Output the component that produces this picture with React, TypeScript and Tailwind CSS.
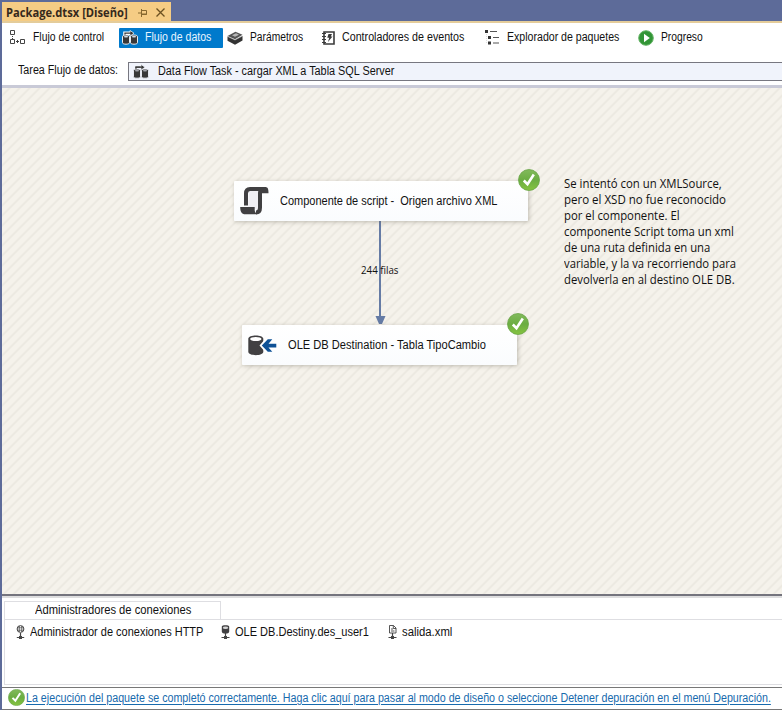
import { useLayoutEffect, useRef } from "react";
import type { ReactNode } from "react";

type FitProps = { w: number; children: string; className?: string };

// Label condensed or widened horizontally so the text takes exactly `w` pixels.
function Fit({ w, children, className = "" }: FitProps) {
  const ref = useRef<HTMLSpanElement>(null);
  useLayoutEffect(() => {
    const el = ref.current;
    if (!el) return;
    el.style.transform = `scaleX(${w / el.offsetWidth})`;
  }, [w, children]);
  return (
    <span className={`inline-block shrink-0 whitespace-pre ${className}`} style={{ width: w }}>
      <span ref={ref} className="inline-block origin-left">
        {children}
      </span>
    </span>
  );
}

function Check({ size }: { size: number }) {
  return (
    <svg width={size} height={size} viewBox="0 0 22 22" className="block shrink-0">
      <defs>
        <linearGradient id="ok" x1="0" y1="0" x2="0" y2="1">
          <stop offset="0" stopColor="#82ba5c" />
          <stop offset="0.5" stopColor="#6bad42" />
          <stop offset="1" stopColor="#86c440" />
        </linearGradient>
      </defs>
      <circle cx="11" cy="11" r="10.5" fill="url(#ok)" stroke="#69a548" strokeWidth="0.8" />
      <path d="M5.8 11.500 L9.500 15.200 L15.800 5.500" fill="none" stroke="#fff" strokeWidth="2.600" />
    </svg>
  );
}

function ControlFlowIcon() {
  return (
    <svg width="15" height="15" viewBox="0 0 15 15" fill="none" stroke="#444" className="block">
      <path d="M.5 .5h4v4h-4zM.5 9.5h4v4h-4zM10.500 9.500h4v4h-4zM2.500 6v1M2.500 8v1M6 11.500h3M7.500 10v3" />
    </svg>
  );
}

function DataFlowIcon({ light = false }: { light?: boolean }) {
  const edge = light ? "#fff" : "#f0f3fb";
  return (
    <svg width="16" height="15" viewBox="0 0 16 15" className="block">
      <path d="M3 6V3.200H9" fill="none" stroke={light ? "#fff" : "#3a3a3a"} strokeWidth={light ? 3.500 : 1.200} />
      <path d="M8 .5l4 2.700-4 3z" fill="#333" stroke={edge} strokeWidth=".7" />
      <path d="M3 5V3.200H9" fill="none" stroke="#3a3a3a" strokeWidth="1.300" />
      {[0, 8].map((x) => (
        <g key={x} transform={`translate(${x} 0)`}>
          <path d="M.5 6.500c0-2 7-2 7 0v6.200c0 2-7 2-7 0z" fill="#383838" stroke={edge} strokeWidth=".9" />
          <ellipse cx="4" cy="6.800" rx="2.300" ry=".8" fill={light ? "#d6e5f2" : "#a9abb2"} />
        </g>
      ))}
    </svg>
  );
}

function BoxIcon() {
  return (
    <svg width="16" height="14" viewBox="0 0 16 14" className="block">
      <path d="M.5 5.500 8 9l7.500-4v4.500L8 13.700.5 9.800z" fill="#333" />
      <path d="M.5 5 8.500.8l7 3L8 8.300z" fill="#555" />
      <path d="M5 4.300 9 2.300l3 1.400-4 2z" fill="#b7b7b7" />
      <path d="M.7 5.500 8 9l7.400-4" fill="none" stroke="#aaa" strokeWidth=".6" />
    </svg>
  );
}

function EventIcon() {
  return (
    <svg width="13" height="14" viewBox="0 0 13 14" fill="none" className="block">
      <path d="M2 1h10v12H2z" stroke="#3b3b3b" strokeWidth="1.600" />
      <path d="M0 2.500h4M0 5.500h4M0 8.500h4M0 11.500h4" stroke="#3b3b3b" />
      <path d="M6.500 3h3.500L8.800 5.500h1.700L6 11l1.200-4.200H5.300z" fill="#3b3b3b" />
    </svg>
  );
}

function TreeIcon() {
  return (
    <svg width="15" height="15" viewBox="0 0 15 15" className="block">
      <path d="M0 0h3v3H0zM3 6h3v3H3zM3 11.500h3v3H3z" fill="#333" />
      <path d="M5 1.500h7M8 7.500h6M8 13h6" stroke="#555" strokeWidth="1.200" />
      <path d="M1.500 4v9.500" stroke="#ddd" strokeDasharray="1 1" />
    </svg>
  );
}

function PlayIcon() {
  return (
    <svg width="16" height="16" viewBox="0 0 16 16" className="block">
      <circle cx="8" cy="8" r="7.300" fill="#329536" stroke="#67b568" />
      <path d="M6 3.800v8.400L11.800 8z" fill="#fff" />
    </svg>
  );
}

function ScriptIcon() {
  return (
    <svg width="29" height="28" viewBox="0 0 29 28" className="block">
      <path d="M9 3h13v17c0 3-1 5-3 5l-3-3H8z" fill="#f0eff4" />
      <path
        d="M6 18.500V6.500C6 3.500 7 2 10 2H25.500M22.500 2c-2 0-2.500 1.500-2.500 4V20.500c0 3.500-1.300 5-4 5"
        fill="none"
        stroke="#414042"
        strokeWidth="4"
      />
      <path d="M21 0h4c3 0 3.500 2 3.500 6.300H21zM.2 20h14.500v3c0 2 1 2.800 2.200 4.300H5.500C1.500 27.300.2 24.500.2 20z" fill="#414042" />
    </svg>
  );
}

function DestinationIcon() {
  return (
    <svg width="29" height="21" viewBox="0 0 29 21" className="block">
      <path d="M.3 3.800c0-4.500 15-4.500 15 0v13c0 4.500-15 4.500-15 0z" fill="#414042" />
      <ellipse cx="7.800" cy="4" rx="5.700" ry="2" fill="#fff" />
      <path d="M11.500 10.500 18 3l2.500 4.500H29v6h-8.500L18 18z" fill="#fff" />
      <path d="M13.800 10.500 19.800 4.300h4.500L20.500 8.800h7.800v3.600h-7.800l3.800 4.300h-4.500z" fill="#0e5196" />
    </svg>
  );
}

function HttpIcon() {
  return (
    <svg width="9" height="14" viewBox="0 0 9 14" fill="none" stroke="#444" className="block">
      <circle cx="4.500" cy="4" r="3.400" />
      <path d="M1 2.800h7M1 5.200h7M3.300 1v6M5.700 1v6M4.500 8v5" strokeWidth=".7" />
      <path d="M4.500 8v4.500M.8 12.500h7.400" strokeWidth="1.200" />
      <path d="M3 11h3v3H3z" fill="#444" stroke="none" />
    </svg>
  );
}

function DbIcon() {
  return (
    <svg width="9" height="14" viewBox="0 0 9 14" className="block">
      <path d="M.8 1.500c0-1.800 7.400-1.800 7.400 0v5c0 3-7.400 3-7.400 0z" fill="#414042" />
      <ellipse cx="4.500" cy="2.800" rx="2.700" ry="1.300" fill="#d5d5d5" />
      <path d="M4.500 8v4.500M.5 12.500h8" stroke="#444" strokeWidth="1.200" />
      <path d="M3 11h3v3H3z" fill="#444" />
    </svg>
  );
}

function FileIcon() {
  return (
    <svg width="9" height="14" viewBox="0 0 9 14" fill="none" stroke="#444" className="block">
      <path d="M1.500.5h4l2.500 2.500v5H1.500zM5.300.5v3H8M3 4h2M3 6h3.500" strokeWidth=".9" />
      <path d="M4.500 8v4.500M.5 12.500h8" strokeWidth="1.200" />
      <path d="M3 11h3v3H3z" fill="#444" stroke="none" />
    </svg>
  );
}

function Node({ icon, children, className }: { icon: ReactNode; children: ReactNode; className: string }) {
  return (
    <div
      className={`absolute flex h-10 items-center rounded-[1px] bg-linear-to-b from-white to-[#fafcfe] shadow-[1px_1px_4px_rgba(110,105,90,0.4)] ${className}`}
    >
      {icon}
      {children}
    </div>
  );
}

const note: [string, number][] = [
  ["Se intentó con un XMLSource,", 158],
  ["pero el XSD no fue reconocido", 162],
  ["por el componente. El", 116],
  ["componente Script toma un xml", 170],
  ["de una ruta definida en una", 146],
  ["variable, y la va recorriendo para", 172],
  ["devolverla en al destino OLE DB.", 171],
];

export default function App() {
  return (
    <div className="flex h-[710px] w-[782px] flex-col overflow-hidden bg-[#5d6b99] pl-0.5 font-['Liberation_Sans',sans-serif] text-[12px] leading-4 text-[#111]">
      <div className="flex h-[21px] shrink-0 pt-0.5">
        <div className="flex w-[169px] items-center bg-[#f5cc84] pl-1 pt-0.5 text-[#35291c]">
          <Fit w={122} className="font-['Open_Sans',sans-serif] text-[12px] font-bold">Package.dtsx [Diseño]</Fit>
          <svg width="9" height="8" viewBox="0 0 9 8" fill="none" stroke="#86682f" className="ml-2.5 block">
            <path d="M0 4h3M3.500 0v8M4 1.500h4.500v4H4M4 5h5" />
          </svg>
          <svg width="9" height="9" viewBox="0 0 9 9" fill="none" stroke="#6c5121" strokeWidth="1.300" className="ml-[9px] block">
            <path d="m.5.5 8 8M8.500.5l-8 8" />
          </svg>
        </div>
      </div>
      <div className="h-0.5 shrink-0 bg-[#e4cc9a]" />

      <div className="flex h-[62px] shrink-0 flex-col bg-white">
        <div className="flex h-[29px] items-center">
          <div className="flex w-[117px] items-center pl-2">
            <ControlFlowIcon />
            <Fit w={71} className="-mt-px ml-2">Flujo de control</Fit>
          </div>
          <div className="flex h-5 w-[104px] items-center rounded-[1px] bg-[#007acc] pl-[3px] text-[#e8f5ff]">
            <DataFlowIcon light />
            <Fit w={66} className="-mt-px ml-[7px]">Flujo de datos</Fit>
          </div>
          <div className="flex w-[94px] items-center pl-1">
            <BoxIcon />
            <Fit w={53} className="-mt-px ml-[7px]">Parámetros</Fit>
          </div>
          <div className="flex w-[168px] items-center pl-[5px]">
            <EventIcon />
            <Fit w={122} className="-mt-px ml-[7px]">Controladores de eventos</Fit>
          </div>
          <div className="flex w-[153px] items-center">
            <TreeIcon />
            <Fit w={112} className="-mt-px ml-[7px]">Explorador de paquetes</Fit>
          </div>
          <div className="flex items-center">
            <PlayIcon />
            <Fit w={42} className="-mt-px ml-[7px]">Progreso</Fit>
          </div>
        </div>
        <div className="mt-[9px] flex h-5 items-center">
          <Fit w={100} className="-mt-0.5 ml-4">Tarea Flujo de datos:</Fit>
          <div className="ml-2.5 flex h-[19px] flex-1 items-center border border-r-0 border-[#777780] bg-[#f0f3fb] pl-1">
            <DataFlowIcon />
            <Fit w={236} className="ml-[9px]">Data Flow Task - cargar XML a Tabla SQL Server</Fit>
          </div>
        </div>
      </div>
      <div className="h-[3px] shrink-0 bg-[#c9cad7]" />

      <div className="relative h-[506px] shrink-0 bg-[#f5f2eb] bg-[repeating-linear-gradient(135deg,#f5f2eb_0px,#f5f2eb_3.8px,#eae7df_5.4px,#f5f2eb_7.071px)]">
        <div className="absolute left-[377px] top-[133px] h-24 w-0.5 bg-[#657ba5]" />
        <svg width="11" height="9" viewBox="0 0 11 9" className="absolute left-[373px] top-[228px]">
          <path d="M.5 0h10l-3.500 8h-3z" fill="#657ba5" />
        </svg>
        <Fit w={38} className="absolute left-[359px] top-[174px] font-['Open_Sans',sans-serif] text-[10px] leading-4">244 filas</Fit>

        <Node className="left-[232px] top-[93px] w-[294px] pl-1.5" icon={<ScriptIcon />}>
          <Fit w={217} className="ml-[11px]">Componente de script -  Origen archivo XML</Fit>
        </Node>
        <div className="absolute left-[516px] top-[81px]"><Check size={22} /></div>

        <Node className="left-[240px] top-[237px] w-[275px] pl-1.5" icon={<DestinationIcon />}>
          <Fit w={198} className="ml-[11px]">OLE DB Destination - Tabla TipoCambio</Fit>
        </Node>
        <div className="absolute left-[505px] top-[225px]"><Check size={22} /></div>

        <div className="absolute left-[562px] top-[88px] flex flex-col items-start font-['Open_Sans',sans-serif] text-[12px] leading-4">
          {note.map(([line, w]) => (
            <Fit key={line} w={w}>{line}</Fit>
          ))}
        </div>
      </div>

      <div className="h-0.5 shrink-0 bg-[#74747d]" />
      <div className="h-0.5 shrink-0 bg-[#dededf]" />
      <div className="flex h-[89px] shrink-0 flex-col bg-white pl-0.5 pt-[3px]">
        <div className="flex h-[18px] w-[217px] items-center justify-center border border-b-0 border-[#dedee2] pb-0.5">
          <Fit w={156}>Administradores de conexiones</Fit>
        </div>
        <div className="flex h-[66px] items-start border border-r-0 border-[#dedee2] pt-1">
          <div className="flex w-[216px] items-center pl-[11px]">
            <HttpIcon />
            <Fit w={173} className="ml-[5px]">Administrador de conexiones HTTP</Fit>
          </div>
          <div className="flex w-[167px] items-center">
            <DbIcon />
            <Fit w={134} className="ml-[5px]">OLE DB.Destiny.des_user1</Fit>
          </div>
          <div className="flex items-center">
            <FileIcon />
            <Fit w={50} className="ml-[5px]">salida.xml</Fit>
          </div>
        </div>
      </div>
      <div className="flex h-[23px] shrink-0 items-center border-y border-[#777] bg-white pl-1.5">
        <div className="-mt-0.5"><Check size={17} /></div>
        <Fit w={745} className="-mt-0.5 ml-px text-[#176aad] [&>span]:underline [&>span]:underline-offset-2">La ejecución del paquete se completó correctamente. Haga clic aquí para pasar al modo de diseño o seleccione Detener depuración en el menú Depuración.</Fit>
      </div>
    </div>
  );
}
